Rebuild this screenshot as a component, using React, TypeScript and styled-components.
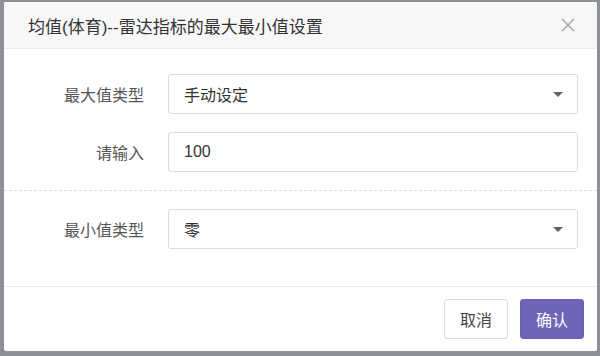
import React from 'react';
import styled, { createGlobalStyle } from 'styled-components';

const GlobalStyle = createGlobalStyle`
  html, body {
    margin: 0;
    padding: 0;
    background: #8d9097;
    font-family: "Liberation Sans", "Noto Sans CJK SC", sans-serif;
  }
`;

const Page = styled.div`
  width: 600px;
  height: 356px;
  padding: 2px 0 0 4px;
  box-sizing: border-box;
  overflow: hidden;
`;

const Modal = styled.div`
  width: 593px;
  height: 349px;
  background: #fff;
  border-radius: 2px;
  display: flex;
  flex-direction: column;
  overflow: hidden;
`;

const Header = styled.div`
  height: 47px;
  box-sizing: border-box;
  background: #f7f7f7;
  border-bottom: 1px solid #ebebeb;
  display: flex;
  align-items: center;
  justify-content: space-between;
  padding: 0 22px 0 24px;
`;

const Title = styled.h3`
  margin: 0;
  font-size: 17px;
  font-weight: normal;
  color: #333;
`;

const CloseButton = styled.button`
  border: 0;
  background: none;
  padding: 0;
  width: 14px;
  height: 14px;
  display: flex;
  cursor: pointer;
`;

const Body = styled.div`
  flex: 1;
  padding: 25px 19px 0 0;
  border-bottom: 1px solid #e9e9e9;
`;

const Row = styled.div<{ $gap?: number }>`
  display: flex;
  align-items: center;
  margin-bottom: ${(p) => p.$gap ?? 18}px;
`;

const Label = styled.label`
  width: 140px;
  text-align: right;
  font-size: 16px;
  color: #555;
  padding-right: 24px;
  box-sizing: content-box;
`;

const Field = styled.div`
  flex: 1;
  height: 40px;
  box-sizing: border-box;
  border: 1px solid #d8dde3;
  border-radius: 3px;
  display: flex;
  align-items: center;
  justify-content: space-between;
  padding: 0 14px 0 15px;
  font-size: 16px;
  color: #333;
`;

const Caret = styled.span`
  width: 0;
  height: 0;
  border-left: 5px solid transparent;
  border-right: 5px solid transparent;
  border-top: 5px solid #5f6266;
`;

const Divider = styled.div`
  border-top: 1px dashed #dcdcdc;
  margin: 0 -19px 18px 0;
`;

const Footer = styled.div`
  height: 64px;
  display: flex;
  align-items: center;
  justify-content: flex-end;
  gap: 12px;
  padding-right: 13px;
`;

const Button = styled.button<{ $primary?: boolean }>`
  width: 64px;
  height: 40px;
  border-radius: 3px;
  font-family: inherit;
  font-size: 16px;
  cursor: pointer;
  border: 1px solid ${(p) => (p.$primary ? '#6a60b3' : '#d8dde3')};
  background: ${(p) => (p.$primary ? '#6f65b8' : '#fff')};
  color: ${(p) => (p.$primary ? '#fff' : '#444')};
`;

export default function App() {
  return (
    <Page>
      <GlobalStyle />
      <Modal>
        <Header>
          <Title>均值(体育)--雷达指标的最大最小值设置</Title>
          <CloseButton aria-label="关闭">
            <svg width="14" height="14" viewBox="0 0 14 14">
              <path d="M1 1 L13 13 M13 1 L1 13" stroke="#a0a0a0" strokeWidth="1.2" />
            </svg>
          </CloseButton>
        </Header>
        <Body>
          <Row>
            <Label>最大值类型</Label>
            <Field>
              手动设定
              <Caret />
            </Field>
          </Row>
          <Row>
            <Label>请输入</Label>
            <Field>100</Field>
          </Row>
          <Divider />
          <Row $gap={0}>
            <Label>最小值类型</Label>
            <Field>
              零
              <Caret />
            </Field>
          </Row>
        </Body>
        <Footer>
          <Button>取消</Button>
          <Button $primary>确认</Button>
        </Footer>
      </Modal>
    </Page>
  );
}
